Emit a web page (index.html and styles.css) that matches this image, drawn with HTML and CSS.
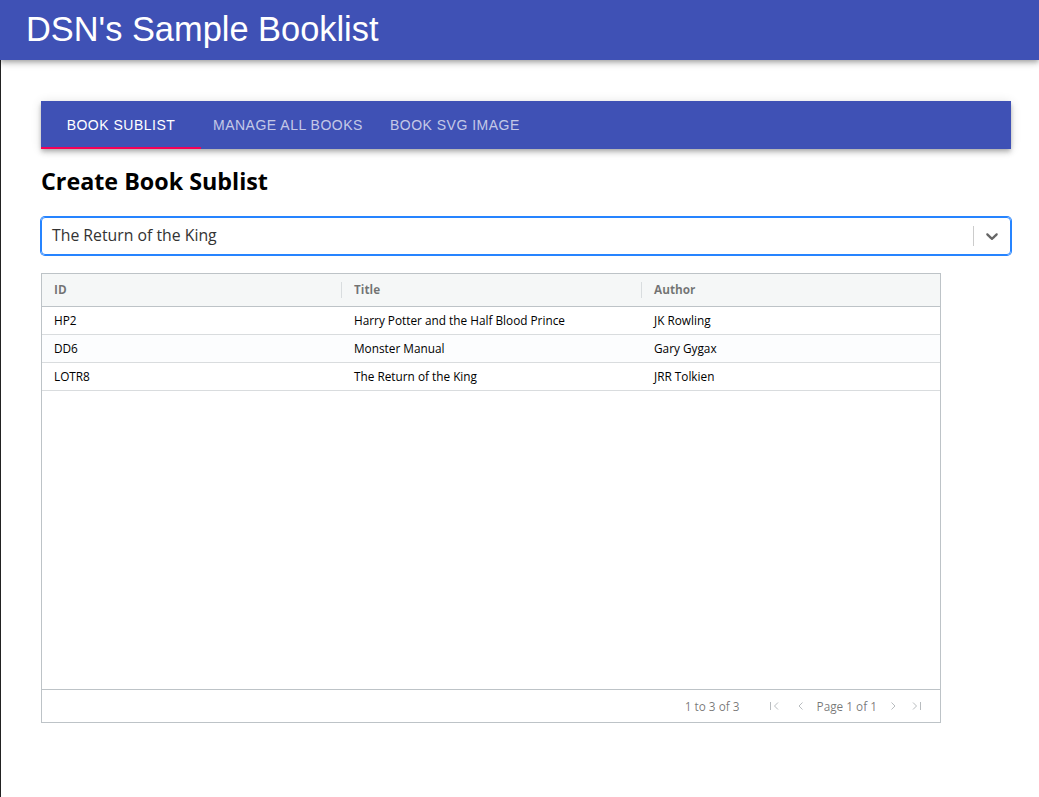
FILE: index.html
```html
<!DOCTYPE html>
<html>
<head>
<meta charset="utf-8">
<link rel="stylesheet" href="styles.css">
</head>
<body>
<header class="appbar"><h1 class="app-title">DSN's Sample Booklist</h1></header>
<main class="main">
  <nav class="tabs">
    <div class="tab active">Book Sublist</div>
    <div class="tab">Manage All Books</div>
    <div class="tab">Book SVG Image</div>
  </nav>
  <h2 class="page-title">Create Book Sublist</h2>
  <div class="select">
    <div class="select-value">The Return of the King</div>
    <span class="select-sep"></span>
    <span class="select-ind">
      <svg width="20" height="20" viewBox="0 0 20 20"><path fill="currentColor" d="M4.516 7.548c0.436-0.446 1.043-0.481 1.576 0l3.908 3.747 3.908-3.747c0.533-0.481 1.141-0.446 1.574 0 0.436 0.445 0.408 1.197 0 1.615-0.406 0.418-4.695 4.502-4.695 4.502-0.217 0.223-0.502 0.335-0.787 0.335s-0.57-0.112-0.789-0.335c0 0-4.287-4.084-4.695-4.502s-0.436-1.17 0-1.615z"/></svg>
    </span>
  </div>
  <div class="grid">
    <div class="grid-head">
      <div class="hcell">ID</div>
      <div class="hcell sep">Title</div>
      <div class="hcell sep">Author</div>
    </div>
    <div class="grid-body">
      <div class="row"><div class="cell">HP2</div><div class="cell">Harry Potter and the Half Blood Prince</div><div class="cell">JK Rowling</div></div>
      <div class="row odd"><div class="cell">DD6</div><div class="cell">Monster Manual</div><div class="cell">Gary Gygax</div></div>
      <div class="row"><div class="cell">LOTR8</div><div class="cell">The Return of the King</div><div class="cell">JRR Tolkien</div></div>
    </div>
    <div class="paging">
      <span class="summary">1 to 3 of 3</span>
      <span class="pager">
        <svg class="picon first" width="12" height="12" viewBox="0 0 12 12"><path d="M1.5 2v8M9 2.5L5.5 6 9 9.5" fill="none" stroke="currentColor" stroke-width="1"/></svg>
        <svg class="picon" width="12" height="12" viewBox="0 0 12 12"><path d="M7.5 2.5L4 6l3.5 3.5" fill="none" stroke="currentColor" stroke-width="1"/></svg>
        <span class="page-text">Page 1 of 1</span>
        <svg class="picon" width="12" height="12" viewBox="0 0 12 12"><path d="M4.5 2.5L8 6 4.5 9.5" fill="none" stroke="currentColor" stroke-width="1"/></svg>
        <svg class="picon" width="12" height="12" viewBox="0 0 12 12"><path d="M3 2.5L6.5 6 3 9.5M10.5 2v8" fill="none" stroke="currentColor" stroke-width="1"/></svg>
      </span>
    </div>
  </div>
</main>
</body>
</html>
```
FILE: styles.css
```css
html, body { margin: 0; padding: 0; background: #fff; }
body { min-height: 797px; }
.appbar {
  position: relative;
  z-index: 2;
  height: 60px;
  background: #3f51b5;
  box-shadow: 0 2px 4px -1px rgba(0,0,0,0.2), 0 4px 5px 0 rgba(0,0,0,0.14), 0 1px 10px 0 rgba(0,0,0,0.12);
  display: flex;
  align-items: center;
}
.app-title {
  margin: 0 0 0 26px;
  font-family: "Liberation Sans", Arial, sans-serif;
  font-weight: 400;
  font-size: 34.4px;
  color: #fff;
  line-height: 1;
  position: relative;
  top: -1px;
}
.main {
  border-left: 1px solid #222;
  min-height: 737px;
  padding: 41px 28px 0 40px;
  box-sizing: border-box;
}
.tabs {
  display: flex;
  height: 48px;
  background: #3f51b5;
  box-shadow: 0 2px 4px -1px rgba(0,0,0,0.2), 0 4px 5px 0 rgba(0,0,0,0.14), 0 1px 10px 0 rgba(0,0,0,0.12);
}
.tab {
  min-width: 160px;
  padding: 2px 12px 0;
  box-sizing: border-box;
  display: flex;
  align-items: center;
  justify-content: center;
  font-family: "Liberation Sans", Arial, sans-serif;
  font-size: 14px;
  font-weight: 400;
  letter-spacing: 0.5px;
  text-transform: uppercase;
  color: rgba(255,255,255,0.7);
  border-bottom: 2px solid transparent;
}
.tab.active { color: #fff; border-bottom-color: #f50057; }
.page-title {
  margin: 18px 0 0 0;
  font-family: "Open Sans", "Noto Sans", sans-serif;
  font-weight: 700;
  font-size: 23.3px;
  line-height: 28px;
  color: #000;
}
.select {
  margin-top: 22px;
  height: 38px;
  box-sizing: border-box;
  border: 1px solid #2684ff;
  box-shadow: 0 0 0 1px #2684ff;
  border-radius: 4px;
  display: flex;
  align-items: center;
}
.select-value {
  flex: 1;
  padding: 0 10px;
  font-family: "Open Sans", "Noto Sans", sans-serif;
  font-size: 15.8px;
  color: #333;
  position: relative;
  top: -1px;
}
.select-sep { width: 1px; align-self: stretch; margin: 8px 0; background: #ccc; }
.select-ind { padding: 8px; color: #666; display: flex; }
.grid {
  margin-top: 18px;
  width: 900px;
  height: 450px;
  box-sizing: border-box;
  border: 1px solid #bdc3c7;
  display: flex;
  flex-direction: column;
  font-family: "Open Sans", "Noto Sans", sans-serif;
  font-size: 11.8px;
  color: #000;
}
.grid-head {
  height: 32px;
  flex: none;
  display: grid;
  grid-template-columns: 300px 300px 1fr;
  background: #f5f7f7;
  border-bottom: 1px solid #bdc3c7;
}
.hcell {
  display: flex;
  align-items: center;
  padding: 0 0 2px 12px;
  font-weight: 700;
  color: rgba(0,0,0,0.54);
  position: relative;
}
.hcell.sep::before {
  content: "";
  position: absolute;
  left: -1px;
  top: 8px;
  height: 16px;
  width: 1px;
  background: rgba(189,195,199,0.5);
}
.grid-body { flex: 1; }
.row {
  height: 28px;
  box-sizing: border-box;
  display: grid;
  grid-template-columns: 300px 300px 1fr;
  border-bottom: 1px solid #d9dcde;
  background: #fff;
}
.row.odd { background: #fcfdfe; }
.cell { display: flex; align-items: center; padding: 0 0 1px 12px; }
.paging {
  height: 32px;
  flex: none;
  border-top: 1px solid #bdc3c7;
  display: flex;
  align-items: center;
  justify-content: flex-end;
  padding-right: 18px;
  color: rgba(0,0,0,0.54);
}
.summary { margin-right: 29px; }
.pager { display: flex; align-items: center; gap: 11px; }
.picon { color: #b8bcbf; }
.picon.first { margin-right: 3px; }
.page-text { margin: 0 -1px; }
```
